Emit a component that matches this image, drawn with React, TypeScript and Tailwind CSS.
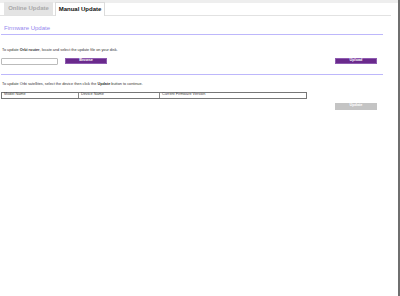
import React from "react";

export default function App() {
  const f = { fontFamily: '"Liberation Sans", Arial, sans-serif' };
  return (
    <div className="w-[400px] h-[296px] bg-white relative overflow-hidden flex" style={f}>
      <div className="flex-1 flex flex-col">
        <div className="h-[3px] bg-[#eeeeee]" />
        <div className="flex items-end pl-[4px] gap-[2px] h-[13px] w-[391px] border-b border-[#e2e2e2]">
          <div className="w-[49px] h-[13px] bg-[#e4e4e4] text-[#a9a9a9] font-bold text-[6px] flex items-center justify-center">
            Online Update
          </div>
          <div className="w-[50px] h-[14px] -mb-px bg-white border border-b-0 border-[#dcdcdc] text-[#111] font-bold text-[6px] flex items-center justify-center">
            Manual Update
          </div>
        </div>
        <div className="w-[383px] pl-[1px] flex flex-col">
          <div className="pl-[3px] pt-[9px] h-[18px] text-[#9488ee] text-[6px] leading-none">Firmware Update</div>
          <div className="h-px bg-[#bdb7fb]" />
          <div className="pl-[1px] pt-[14px] text-[3.8px] text-[#333] leading-none">
            To update <b>Orbi router</b>, locate and select the update file on your disk.
          </div>
          <div className="flex items-center mt-[5px] h-[7px] pr-[6px]">
            <div className="w-[57px] h-[7px] border border-[#bbbbbb] rounded-[1px] bg-white" />
            <div className="ml-[7px] w-[42px] h-[6px] bg-[#6a2a8c] border border-[#8e5bb0] text-white font-bold text-[3.8px] flex items-center justify-center">
              Browse
            </div>
            <div className="ml-auto w-[42px] h-[6px] bg-[#6a2a8c] border border-[#8e5bb0] text-white font-bold text-[3.8px] flex items-center justify-center">
              Upload
            </div>
          </div>
          <div className="h-px bg-[#bdb7fb] mt-[9px]" />
          <div className="pl-[1px] pt-[8px] text-[3.8px] text-[#333] leading-none">
            To update Orbi satellites, select the device then click the <b>Update</b> button to continue.
          </div>
          <div className="flex mt-[5px] w-[306px] h-[7px] border border-[#777] text-[3.8px] text-[#444]">
            <div className="w-[77px] border-r border-[#888] pl-[2px] flex items-center">Model Name</div>
            <div className="w-[81px] border-r border-[#888] pl-[2px] flex items-center">Device Name</div>
            <div className="flex-1 pl-[2px] flex items-center">Current Firmware Version</div>
          </div>
          <div className="flex justify-end mt-[4px] pr-[6px]">
            <div className="w-[42px] h-[7px] bg-[#c4c4c4] text-white font-bold text-[3.8px] flex items-center justify-center">
              Update
            </div>
          </div>
        </div>
      </div>
      <div className="w-[2px] h-full bg-[#6f6f6f]" />
    </div>
  );
}
